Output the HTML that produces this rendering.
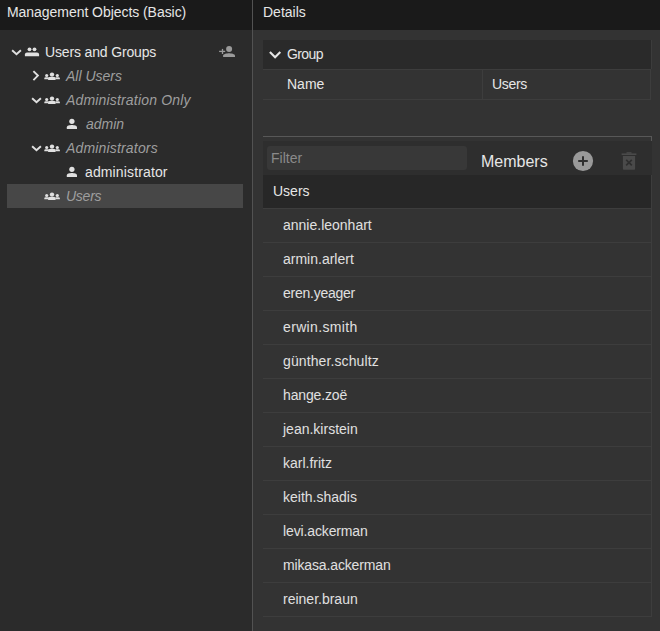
<!DOCTYPE html>
<html><head><meta charset="utf-8">
<style>
*{margin:0;padding:0;box-sizing:border-box}
html,body{width:660px;height:631px;overflow:hidden;background:#333333;font-family:"Liberation Sans",sans-serif;font-size:14px}
.abs{position:absolute}
.t{position:absolute;white-space:nowrap;line-height:16px}
.gray{color:#9e9e9e;font-style:italic}
.wh{color:#e6e6e6}
svg{position:absolute;display:block}
.rl{left:263px;width:389px;height:1px;background:#3d3d3d}
.it{left:283px;color:#e0e0e0}
</style></head><body>
<div class="abs" style="left:0;top:0;width:252px;height:631px;background:#2b2b2b"></div>
<div class="abs" style="left:0;top:0;width:252px;height:30px;background:#1a1a1a"></div>
<div class="t wh" style="left:7px;top:4px;letter-spacing:-0.05px">Management Objects (Basic)</div>

<div class="abs" style="left:7px;top:184px;width:236px;height:24px;background:#474747"></div>

<svg style="left:11px;top:48px" width="11" height="8" viewBox="0 0 11 8"><path d="M1.1 2.2 L5.5 6.3 L9.9 2.2" stroke="#e0e0e0" stroke-width="1.9" fill="none"/></svg>
<svg style="left:24px;top:47px" width="16" height="10" viewBox="0 0 16 10" fill="#e0e0e0"><circle cx="5.5" cy="2.3" r="1.9"/><circle cx="10.5" cy="2.3" r="1.9"/><path d="M0.9 9.2V7.4Q0.9 5.6 3 5.6H13Q15.1 5.6 15.1 7.4V9.2Z"/></svg>
<div class="t wh" style="left:45px;top:44px;letter-spacing:-0.15px">Users and Groups</div>
<svg style="left:219px;top:44px" width="17" height="14" viewBox="0 0 17 14" fill="#9a9a9a"><path d="M0.1 6.75h6.1v1.3H0.1z"/><path d="M2.85 4.9h1.3v5.1h-1.3z"/><circle cx="10.1" cy="5.1" r="3"/><path d="M4.1 13V11.6C4.1 9.9 8 9.2 10 9.2C12 9.2 16 9.9 16 11.6V13Z"/></svg>

<svg style="left:32px;top:70px" width="8" height="11" viewBox="0 0 8 11"><path d="M1.4 1.1 L5.9 5.6 L1.4 10.1" stroke="#e0e0e0" stroke-width="1.9" fill="none"/></svg>
<svg style="left:44px;top:72px" width="16" height="9" viewBox="0 0 16 9" fill="#e0e0e0"><circle cx="8" cy="2.6" r="2.2"/><circle cx="2.7" cy="3.5" r="1.6"/><circle cx="13.3" cy="3.5" r="1.6"/><path d="M4.1 8V6.3Q4.1 5 5.5 5H10.2Q11.6 5 11.6 6.3V8Z"/><path d="M0.3 7.2V6.3Q0.3 5.3 1.6 5.3H4.5V7.2Z"/><path d="M11.5 5.3H14.6Q15.9 5.3 15.9 6.3V7.2H11.5Z"/></svg>
<div class="t gray" style="left:66px;top:68px">All Users</div>

<svg style="left:31px;top:96px" width="11" height="8" viewBox="0 0 11 8"><path d="M1.1 2.2 L5.5 6.3 L9.9 2.2" stroke="#e0e0e0" stroke-width="1.9" fill="none"/></svg>
<svg style="left:44px;top:96px" width="16" height="9" viewBox="0 0 16 9" fill="#e0e0e0"><circle cx="8" cy="2.6" r="2.2"/><circle cx="2.7" cy="3.5" r="1.6"/><circle cx="13.3" cy="3.5" r="1.6"/><path d="M4.1 8V6.3Q4.1 5 5.5 5H10.2Q11.6 5 11.6 6.3V8Z"/><path d="M0.3 7.2V6.3Q0.3 5.3 1.6 5.3H4.5V7.2Z"/><path d="M11.5 5.3H14.6Q15.9 5.3 15.9 6.3V7.2H11.5Z"/></svg>
<div class="t gray" style="left:66px;top:92px;letter-spacing:0.17px">Administration Only</div>

<svg style="left:66px;top:118px" width="12" height="12" viewBox="0 0 12 12" fill="#e0e0e0"><circle cx="5.9" cy="3.3" r="2.65"/><path d="M0.8 11.05V9.2C0.8 7.6 3.6 6.9 5.9 6.9C8.2 6.9 11 7.6 11 9.2V11.05Z"/></svg>
<div class="t gray" style="left:86px;top:116px">admin</div>

<svg style="left:31px;top:144px" width="11" height="8" viewBox="0 0 11 8"><path d="M1.1 2.2 L5.5 6.3 L9.9 2.2" stroke="#e0e0e0" stroke-width="1.9" fill="none"/></svg>
<svg style="left:44px;top:144px" width="16" height="9" viewBox="0 0 16 9" fill="#e0e0e0"><circle cx="8" cy="2.6" r="2.2"/><circle cx="2.7" cy="3.5" r="1.6"/><circle cx="13.3" cy="3.5" r="1.6"/><path d="M4.1 8V6.3Q4.1 5 5.5 5H10.2Q11.6 5 11.6 6.3V8Z"/><path d="M0.3 7.2V6.3Q0.3 5.3 1.6 5.3H4.5V7.2Z"/><path d="M11.5 5.3H14.6Q15.9 5.3 15.9 6.3V7.2H11.5Z"/></svg>
<div class="t gray" style="left:66px;top:140px;letter-spacing:0.17px">Administrators</div>

<svg style="left:66px;top:166px" width="12" height="12" viewBox="0 0 12 12" fill="#e0e0e0"><circle cx="5.9" cy="3.3" r="2.65"/><path d="M0.8 11.05V9.2C0.8 7.6 3.6 6.9 5.9 6.9C8.2 6.9 11 7.6 11 9.2V11.05Z"/></svg>
<div class="t wh" style="left:85px;top:164px;letter-spacing:0.13px">administrator</div>

<svg style="left:44px;top:192px" width="16" height="9" viewBox="0 0 16 9" fill="#e0e0e0"><circle cx="8" cy="2.6" r="2.2"/><circle cx="2.7" cy="3.5" r="1.6"/><circle cx="13.3" cy="3.5" r="1.6"/><path d="M4.1 8V6.3Q4.1 5 5.5 5H10.2Q11.6 5 11.6 6.3V8Z"/><path d="M0.3 7.2V6.3Q0.3 5.3 1.6 5.3H4.5V7.2Z"/><path d="M11.5 5.3H14.6Q15.9 5.3 15.9 6.3V7.2H11.5Z"/></svg>
<div class="t gray" style="left:66px;top:188px;letter-spacing:-0.25px">Users</div>

<div class="abs" style="left:252px;top:0;width:1px;height:631px;background:#525252"></div>

<div class="abs" style="left:253px;top:0;width:407px;height:30px;background:#1a1a1a"></div>
<div class="t wh" style="left:263px;top:4px">Details</div>

<div class="abs" style="left:263px;top:40px;width:389px;height:29px;background:#2a2a2a;border-right:1px solid #3c3c3c"></div>
<svg style="left:269px;top:50px" width="13" height="10" viewBox="0 0 13 10"><path d="M0.9 2 L6.1 7.2 L11.3 2" stroke="#e6e6e6" stroke-width="2.1" fill="none"/></svg>
<div class="t wh" style="left:287px;top:46px;letter-spacing:-0.6px">Group</div>
<div class="abs" style="left:263px;top:69px;width:388px;height:31px;border-top:1px solid #3d3d3d;border-bottom:1px solid #3d3d3d;border-right:1px solid #3d3d3d"></div>
<div class="abs" style="left:482px;top:69px;width:1px;height:31px;background:#3d3d3d"></div>
<div class="t wh" style="left:287px;top:76px">Name</div>
<div class="t wh" style="left:492px;top:76px;letter-spacing:-0.3px">Users</div>

<div class="abs" style="left:263px;top:136px;width:389px;height:1px;background:#585858"></div>
<div class="abs" style="left:651px;top:136px;width:1px;height:5px;background:#585858"></div>

<div class="abs" style="left:263px;top:141px;width:389px;height:34px;background:#2e2e2e"></div>
<div class="abs" style="left:267px;top:146px;width:200px;height:24px;background:#383838;border-radius:3px"></div>
<div class="t" style="left:271px;top:150px;color:#8a8a8a">Filter</div>
<div class="t wh" style="left:481px;top:154px;font-size:16px">Members</div>
<svg style="left:572px;top:150px" width="22" height="22" viewBox="0 0 22 22"><circle cx="11" cy="11" r="10.1" fill="#999"/><path d="M11 6.2v9.6M6.2 11h9.6" stroke="#2e2e2e" stroke-width="2"/></svg>
<svg style="left:621px;top:151px" width="16" height="20" viewBox="0 0 16 20" fill="#4a4a4a"><path d="M0.6 2.4h14.8v1.6H0.6z"/><path d="M5.5 1.2h5v1.5h-5z"/><path d="M1.9 5h12.2v12.8q0 1-1 1H2.9q-1 0-1-1z"/><path d="M4.6 9.4l1.2-1.2L8 10.4l2.2-2.2l1.2 1.2L9.2 11.6l2.2 2.2l-1.2 1.2L8 12.8l-2.2 2.2l-1.2-1.2L6.8 11.6z" fill="#2e2e2e"/></svg>

<div class="abs" style="left:263px;top:175px;width:388px;height:33px;background:#272727"></div>
<div class="abs" style="left:651px;top:175px;width:1px;height:442px;background:#3d3d3d"></div>
<div class="t wh" style="left:273px;top:183px">Users</div>

<div class="abs rl" style="top:208px"></div>
<div class="abs rl" style="top:242px"></div>
<div class="t it" style="top:217px">annie.leonhart</div>
<div class="abs rl" style="top:276px"></div>
<div class="t it" style="top:251px">armin.arlert</div>
<div class="abs rl" style="top:310px"></div>
<div class="t it" style="top:285px;letter-spacing:-0.25px">eren.yeager</div>
<div class="abs rl" style="top:344px"></div>
<div class="t it" style="top:319px;letter-spacing:0.34px">erwin.smith</div>
<div class="abs rl" style="top:378px"></div>
<div class="t it" style="top:353px;letter-spacing:0.11px">günther.schultz</div>
<div class="abs rl" style="top:412px"></div>
<div class="t it" style="top:387px;letter-spacing:-0.15px">hange.zoë</div>
<div class="abs rl" style="top:446px"></div>
<div class="t it" style="top:421px">jean.kirstein</div>
<div class="abs rl" style="top:480px"></div>
<div class="t it" style="top:455px">karl.fritz</div>
<div class="abs rl" style="top:514px"></div>
<div class="t it" style="top:489px">keith.shadis</div>
<div class="abs rl" style="top:548px"></div>
<div class="t it" style="top:523px;letter-spacing:-0.13px">levi.ackerman</div>
<div class="abs rl" style="top:582px"></div>
<div class="t it" style="top:557px;letter-spacing:-0.14px">mikasa.ackerman</div>
<div class="abs rl" style="top:616px"></div>
<div class="t it" style="top:591px">reiner.braun</div>
</body></html>
